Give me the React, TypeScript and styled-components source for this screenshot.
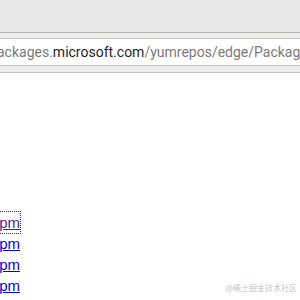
import styled, { createGlobalStyle } from 'styled-components';

const GlobalStyle = createGlobalStyle`
  html, body {
    margin: 0;
    padding: 0;
    background: #ffffff;
    overflow: hidden;
  }
`;

const Window = styled.div`
  position: relative;
  display: flex;
  flex-direction: column;
  width: 300px;
  height: 300px;
  overflow: hidden;
  background: #fff;
`;

const TitleBar = styled.div`
  height: 32px;
  flex-shrink: 0;
  background: #e8e8e7;
  border-bottom: 1px solid #b4b4b1;
`;

const NavBar = styled.div`
  display: flex;
  flex-shrink: 0;
  height: 40px;
  box-sizing: border-box;
  padding: 5px 0 6px;
  background: #ededeb;
  border-bottom: 1px solid #c4c4c1;
`;

const UrlField = styled.div`
  display: flex;
  align-items: center;
  flex: 1;
  margin: 0 -20px;
  box-sizing: border-box;
  border: 1px solid #c2c2bf;
  background: #fff;
  overflow: hidden;
  white-space: nowrap;
  font-family: Roboto, 'Noto Sans', sans-serif;
  font-size: 14px;
  color: #7a7a7a;
`;

const UrlText = styled.span`
  margin-left: 16px;
`;

const Host = styled.span`
  color: #1e1e1e;
`;

const Page = styled.div`
  flex: 1;
  padding-top: 139px;
`;

const Listing = styled.div`
  display: flex;
  flex-direction: column;
  align-items: flex-end;
  width: 20px;
`;

const FileLink = styled.a<{ $visited?: boolean; $focused?: boolean }>`
  display: block;
  white-space: nowrap;
  font-family: 'Liberation Sans', Arial, sans-serif;
  font-size: 15px;
  line-height: 21px;
  color: ${(p) => (p.$visited ? '#551a8b' : '#0000ee')};
  text-decoration: underline;
  outline: ${(p) => (p.$focused ? '1px dotted #551a8b' : 'none')};
`;

const Watermark = styled.div`
  position: absolute;
  right: 3px;
  bottom: 7px;
  font-family: 'Noto Sans CJK SC', sans-serif;
  font-size: 8px;
  color: #c4c4c4;
`;

const files = [
  'microsoft-edge-beta-90.0.818.8-1.x86_64.rpm',
  'microsoft-edge-beta-90.0.818.14-1.x86_64.rpm',
  'microsoft-edge-beta-90.0.818.22-1.x86_64.rpm',
  'microsoft-edge-beta-90.0.818.27-1.x86_64.rpm',
];

export default function App() {
  return (
    <>
      <GlobalStyle />
      <Window>
        <TitleBar />
        <NavBar>
          <UrlField>
            <UrlText>
              ackages.<Host>microsoft.com</Host>/yumrepos/edge/Packages/
            </UrlText>
          </UrlField>
        </NavBar>
        <Page>
          <Listing>
            {files.map((name, i) => (
              <FileLink key={name} href="#" $visited={i === 0} $focused={i === 0}>
                {name}
              </FileLink>
            ))}
          </Listing>
        </Page>
        <Watermark>@稀土掘金技术社区</Watermark>
      </Window>
    </>
  );
}
